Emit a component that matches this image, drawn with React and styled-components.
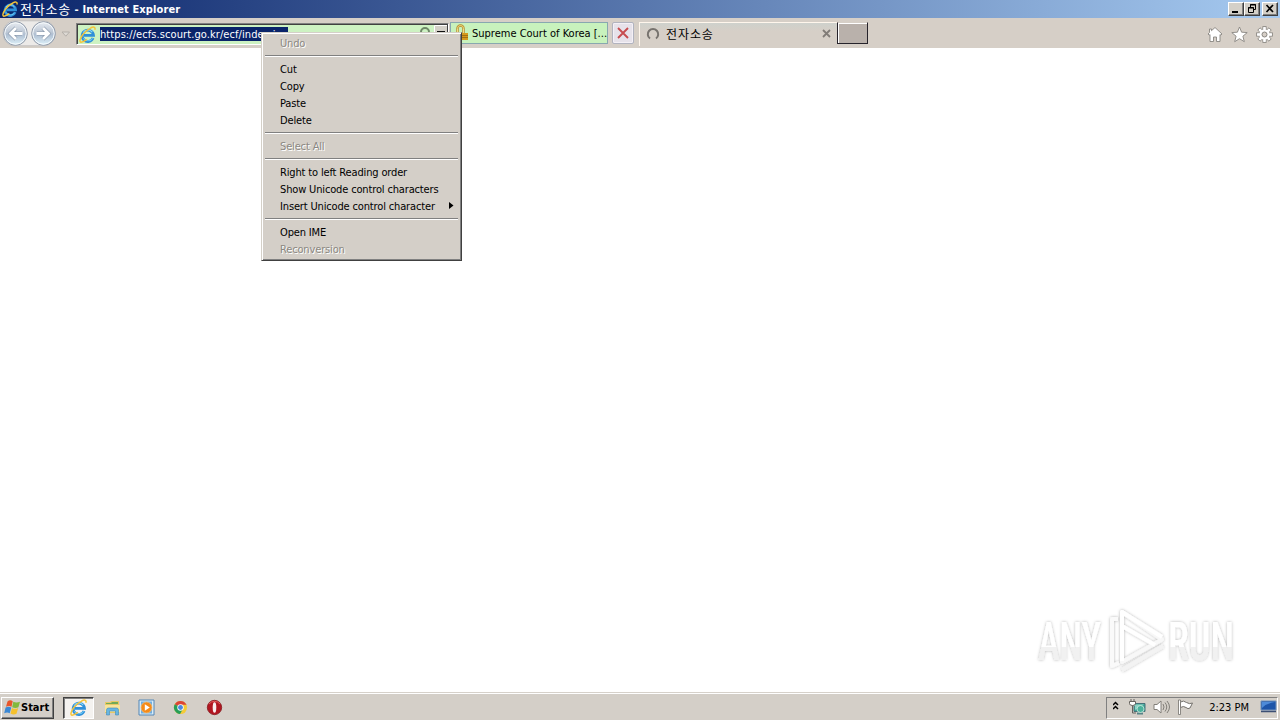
import React from "react";
import styled, { createGlobalStyle, css } from "styled-components";

const GlobalStyle = createGlobalStyle`
  * {
    box-sizing: border-box;
  }
  body {
    margin: 0;
    overflow: hidden;
    background: #fff;
    color: #000;
    font-family: "DejaVu Sans Condensed", "DejaVu Sans", "Noto Sans CJK KR", sans-serif;
    font-stretch: condensed;
    font-size: 11px;
  }
  svg {
    display: block;
    flex: none;
  }
`;

const Desktop = styled.div`
  position: relative;
  display: flex;
  flex-direction: column;
  width: 1280px;
  height: 720px;
  overflow: hidden;
`;

const TitleBar = styled.header`
  display: flex;
  align-items: center;
  height: 18px;
  padding: 0 2px;
  background: linear-gradient(90deg, #0a246a, #a6caf0);
  color: #fff;
`;

const Label = styled.span`
  padding-top: 2px;
  white-space: pre;
  line-height: 16px;
  font-size: ${p => p.$size || 11}px;
  font-weight: ${p => (p.$bold ? 700 : 400)};
  letter-spacing: ${p => p.$track || 0}px;
`;

const Korean = styled(Label)`
  padding-top: 1px;
  font-family: "Noto Sans CJK KR", sans-serif;
`;

const Caption = styled.div`
  display: flex;
  flex: 1;
  padding-left: 2px;
`;

const WindowButton = styled.button`
  width: 16px;
  height: 14px;
  margin-left: ${p => p.$gap || 0}px;
  padding: 0;
  border: 1px solid;
  border-color: #fff #404040 #404040 #fff;
  box-shadow: inset -1px -1px #808080;
  background: #d4d0c8;
`;

const Toolbar = styled.nav`
  display: flex;
  align-items: flex-start;
  height: 30px;
  padding: 0 7px 0 2px;
  border-top: 2px solid #d6cfc8;
  background: #d6cfc7;
`;

const NavButtons = styled.div`
  width: 74px;
`;

const AddressBar = styled.div`
  display: flex;
  align-items: center;
  width: 373px;
  height: 22px;
  margin-top: 3px;
  padding-left: 2px;
  border: 1px solid;
  border-color: #808080 #fff #fff #808080;
  box-shadow: inset 1px 1px #404040;
  background: #cdf2c2;
`;

const SelectedUrl = styled.div`
  display: flex;
  align-items: center;
  width: 188px;
  height: 14px;
  margin-left: 4px;
  overflow: hidden;
  background: #0a246a;
  color: #fff;
`;

const AddressTools = styled.div`
  display: flex;
  flex: 1;
  justify-content: flex-end;
  gap: 3px;
`;

const Certificate = styled.div`
  display: flex;
  align-items: center;
  width: 158px;
  height: 22px;
  margin: 2px 0 0 1px;
  padding-left: 5px;
  gap: 4px;
  border: 1px solid #88a8b0;
  background: #c8f2bd;
`;

const StopButton = styled.button`
  display: grid;
  place-items: center;
  width: 22px;
  height: 22px;
  margin: 2px 0 0 4px;
  padding: 0;
  border: 1px solid #b1b3bf;
  border-radius: 2px;
  background: #e6e2ea;
  box-shadow: inset 0 0 0 1px #f4f0f6;
`;

const Tab = styled.div`
  display: flex;
  align-items: center;
  width: 198px;
  height: 24px;
  margin: 2px 0 0 5px;
  padding: 0 6px 2px 6px;
  gap: 6px;
  border-top: 1px solid #fff6ec;
  border-left: 1px solid #fff6ec;
  background: linear-gradient(#ced1cc, #d6cfc7 8px);
`;

const TabTitle = styled.div`
  display: flex;
  flex: 1;
`;

const NewTab = styled.div`
  width: 31px;
  height: 22px;
  margin-top: 2px;
  border: 1px solid #25222a;
  border-top-color: #d6cfc7;
  box-shadow: inset 1px 1px #fff;
  background: #b9b1ab;
`;

const CommandIcons = styled.div`
  display: flex;
  flex: 1;
  justify-content: flex-end;
  gap: 8px;
  padding-top: 6px;
`;

const Page = styled.main`
  position: relative;
  flex: 1;
  background: #fff;
`;

const Watermark = styled.div`
  position: absolute;
  left: 1030px;
  top: 558px;
`;

const Menu = styled.div`
  position: absolute;
  left: 261px;
  top: 32px;
  width: 201px;
  height: 229px;
  padding: 2px 3px 0;
  border: 1px solid;
  border-color: #d4d0c8 #404040 #404040 #d4d0c8;
  box-shadow: inset 1px 1px #fff, inset -1px -1px #808080;
  background: #d4cfc8;
`;

const MenuItem = styled.div`
  display: flex;
  align-items: center;
  justify-content: space-between;
  height: 17px;
  padding: 0 4px 2px 15px;
  ${p =>
    p.$disabled &&
    css`
      color: #8b8882;
      text-shadow: 1px 1px #fff;
    `}
`;

const Separator = styled.div`
  height: 2px;
  margin: 3px 0 4px;
  border-top: 1px solid #808080;
  border-bottom: 1px solid #fff;
`;

const Taskbar = styled.footer`
  display: flex;
  align-items: center;
  height: 28px;
  padding: 3px 2px 1px 1px;
  border-top: 1px solid #d6d1ca;
  box-shadow: inset 0 1px #fff;
  background: #d4cfc8;
`;

const StartButton = styled.button`
  display: flex;
  align-items: center;
  width: 53px;
  height: 22px;
  padding: 0 0 1px 2px;
  border: 1px solid;
  border-color: #fff #404040 #404040 #fff;
  box-shadow: inset -1px -1px #808080;
  background: #d4cfc8;
  color: #000;
  font-family: inherit;
`;

const TaskButton = styled.div`
  display: grid;
  place-items: center;
  width: ${p => (p.$active ? 31 : 34)}px;
  height: 22px;
  ${p =>
    p.$active &&
    css`
      margin: 0 1px 0 9px;
      border: 1px solid;
      border-color: #404040 #fff #fff #404040;
      box-shadow: inset 1px 1px #808080;
      background: #f4f2ef;
    `}
`;

const Tray = styled.div`
  display: flex;
  align-items: center;
  width: 172px;
  height: 22px;
  margin-left: auto;
  padding: 0 0 1px 6px;
  border: 1px solid;
  border-color: #808080 #fff #fff #808080;
`;

const Clock = styled.div`
  flex: 1;
  display: flex;
  justify-content: flex-end;
  padding-right: 11px;
`;

const IeIcon = ({ size = 16 }) => (
  <svg width={size} height={size} viewBox="0 0 16 16" fill="none">
    <path d="M13.200 11.300A5.300 5.300 0 1 1 13.600 8.800H4.600" stroke="#2f8fd8" strokeWidth="2.700" />
    <path d="M12.900 11.500A5.300 5.300 0 0 1 4 11.500" stroke="#6cc8f4" strokeWidth="1" />
    <path d="M3.800 6.300A5.300 5.300 0 0 1 12.500 5.800" stroke="#86d8f9" strokeWidth="1" />
    <path
      d="M10.500 2.200C13.400.4 15.800.6 14.900 3.500M3.200 8.700C.6 12 .2 15.200 2 15.200c1.500 0 3.700-1.300 5.400-2.600M3 8.600C5 5.900 8 3.300 11 2"
      stroke="#f5c43a"
      strokeWidth="1.400"
    />
  </svg>
);

const BackForward = () => (
  <svg width="72" height="28" viewBox="0 0 72 28" fill="none">
    <defs>
      <linearGradient id="orb" x1="0" y1="0" x2="0" y2="1">
        <stop offset="0" stopColor="#e9edf2" />
        <stop offset=".45" stopColor="#bcc7d5" />
        <stop offset=".55" stopColor="#afbfd2" />
        <stop offset="1" stopColor="#e1f4fc" />
      </linearGradient>
    </defs>
    <path d="M13 .8h28c16 0 16 25 0 25H13C-3 25.800-3 .8 13 .8z" fill="#eceae8" stroke="#c3c1c0" />
    {[13.5, 41.5].map(cx => (
      <g key={cx}>
        <circle cx={cx} cy="13.500" r="11.800" fill="url(#orb)" stroke="#929cab" />
        <circle cx={cx} cy="13.500" r="10.700" stroke="#f7fbfd" />
      </g>
    ))}
    <path d="M20 13.500H8.500M14 8l-5.500 5.500L14 19" stroke="#8796aa" strokeWidth="4" />
    <path d="M20.500 13.500H8.500M14 8l-5.500 5.500L14 19" stroke="#fff" strokeWidth="2.800" />
    <path d="M35 13.500h11.500M41 8l5.500 5.500L41 19" stroke="#8796aa" strokeWidth="4" />
    <path d="M34.500 13.500h12M41 8l5.500 5.500L41 19" stroke="#fff" strokeWidth="2.800" />
    <path d="M60 12h7.500l-3.700 4.200z" fill="#dedad5" stroke="#b4afa9" />
  </svg>
);

const SearchGlyph = () => (
  <svg width="13" height="16" viewBox="0 0 13 16" fill="none">
    <circle cx="7" cy="7" r="4" stroke="#6e8767" strokeWidth="2" />
    <path d="m4 10-3 4" stroke="#6e8767" strokeWidth="2" />
  </svg>
);

const DropGlyph = () => (
  <svg width="14" height="18" viewBox="0 0 14 18">
    <path d="M0 0h14v18H0z" fill="#d4d0c8" />
    <path d="M.5 18V.5H14" stroke="#fff" fill="none" />
    <path d="M13.500 0v18" stroke="#404040" />
    <path d="M3 6h8v2l-4 4-4-4z" fill="#111" />
  </svg>
);

const Padlock = () => (
  <svg width="12" height="18" viewBox="0 0 12 18" fill="none">
    <path d="M1.500 8V4.500a3 3 0 0 1 6 0V10" stroke="#b28b29" strokeWidth="2.400" />
    <path d="M1.500 8V4.500a3 3 0 0 1 6 0V10" stroke="#f3dc87" strokeWidth="1" />
    <path d="M3 9h9v7H3z" fill="#d59a1c" />
    <path d="M4 11.500h8m-8 2h8" stroke="#a36f10" />
  </svg>
);

const HomeIcon = () => (
  <svg width="16" height="17" viewBox="0 0 16 17">
    <path
      d="M8 1.500 15 8l-1.200 1.200-.8-.7v7H9.500V11h-3v4.500H3v-7l-.8.7L1 8l1.500-1.500V3h2v1.700z"
      fill="#fff"
      stroke="#898681"
      strokeWidth=".9"
    />
  </svg>
);

const StarIcon = () => (
  <svg width="17" height="17" viewBox="0 0 17 17">
    <path
      d="m8.500 1 2.100 5.200 5.600.4-4.300 3.600 1.400 5.500-4.800-3-4.800 3 1.400-5.500L.8 6.600l5.600-.4z"
      fill="#fff"
      stroke="#898681"
      strokeWidth=".9"
    />
  </svg>
);

const teeth = [0, 45, 90, 135, 180, 225, 270, 315];

const GearIcon = () => (
  <svg width="17" height="17" viewBox="0 0 17 17">
    {teeth.map(a => (
      <rect
        key={a}
        x="6.900"
        y=".6"
        width="3.200"
        height="5"
        fill="#fff"
        stroke="#898681"
        strokeWidth=".9"
        transform={`rotate(${a} 8.500 8.500)`}
      />
    ))}
    <circle cx="8.500" cy="8.500" r="5.500" fill="#fff" stroke="#898681" strokeWidth=".7" />
    {teeth.map(a => (
      <rect key={a} x="7.300" y="1.500" width="2.400" height="4" fill="#fff" transform={`rotate(${a} 8.500 8.500)`} />
    ))}
    <circle cx="8.500" cy="8.500" r="2.500" fill="#d6cfc7" stroke="#898681" />
  </svg>
);

const StartFlag = () => (
  <svg width="17" height="17" viewBox="0 0 17 17">
    <path d="M3.500 2.500Q6 .3 8.700 2.200L7.500 7.800Q5 6.200 2 7.800z" fill="#e8562a" />
    <path d="M9.300 2.700q3 1.600 6.700 0l-1.600 5.500q-2.800 1.500-6.200 0z" fill="#82b93c" />
    <path d="M1.600 8.600q3-1.700 5.700 0L5.700 14.300q-2.500-1.700-5.500 0z" fill="#3b88d4" />
    <path d="M8 9q3 1.700 6.200 0l-1.700 5.700q-3 1.500-6 -.2z" fill="#f5c12d" />
  </svg>
);

const FolderIcon = () => (
  <svg width="17" height="17" viewBox="0 0 17 17">
    <path d="M1 3h5l1-1h8v12H1z" fill="#e8c964" />
    <path d="M2 4h5l1-1h6v2H2z" fill="#72aa57" />
    <path d="M1 6h15v7H1z" fill="#f8e49b" />
    <path d="M2.500 16v-5q0-2 2-2h8q2 0 2 2v5h-3v-4h-6v4z" fill="#68b6e2" stroke="#428cb9" strokeWidth=".6" />
  </svg>
);

const PlayerIcon = () => (
  <svg width="17" height="17" viewBox="0 0 17 17">
    <path d="M1 1h15v15H1z" fill="#d7ebf8" stroke="#5386b6" />
    <path d="M3 2.500h11v12H3z" fill="#70aee0" />
    <circle cx="8.500" cy="8.500" r="5.500" fill="#f58a18" stroke="#fbc379" strokeWidth=".7" />
    <path d="m6.800 5.200 5 3.300-5 3.300z" fill="#fff" />
  </svg>
);

const ChromeIcon = () => (
  <svg width="15" height="15" viewBox="0 0 16 16">
    <circle cx="8" cy="8" r="7" fill="#f4cb38" />
    <path d="M8 8 1.900 4.500A7 7 0 0 1 14.100 4.500L14.400 5H8z" fill="#db4437" />
    <path d="M8 8 1.900 4.500A7 7 0 0 0 7.500 15l3.100-5.500z" fill="#279e58" />
    <circle cx="8" cy="8" r="3.400" fill="#fff" />
    <circle cx="8" cy="8" r="2.600" fill="#4a88df" />
  </svg>
);

const OperaIcon = () => (
  <svg width="17" height="17" viewBox="0 0 17 17">
    <circle cx="8.500" cy="8.500" r="7.200" fill="#b11620" stroke="#7d1015" strokeWidth=".7" />
    <path d="M3 5a7 7 0 0 1 11 0" stroke="#e65c5d" fill="none" />
    <ellipse cx="8.500" cy="8.500" rx="1.800" ry="5.300" fill="#f9eeee" />
  </svg>
);

const NetworkIcon = () => (
  <svg width="17" height="16" viewBox="0 0 17 16" fill="none">
    <path d="M5 4.500h11v8H5z" fill="#41a798" stroke="#477079" />
    <path d="M6 5.500h9L6 11z" fill="#8bd3c4" />
    <path d="M8 14.500h6" stroke="#578387" strokeWidth="2" />
    <circle cx="11.500" cy="10" r="3.500" fill="#4bb29c" stroke="#dcf2ea" strokeWidth=".7" />
    <path d="M1 2h5v4.500H1z" fill="#fff" />
    <path d="M.5 2.500h6v2q0 2-3 2t-3-2zM3.500 6.500V14H7M2 0v3m3-3v3" stroke="#66635e" />
  </svg>
);

const SpeakerIcon = () => (
  <svg width="18" height="16" viewBox="0 0 18 16" fill="none">
    <path d="M1 5.500h3L8 2v12l-4-3.500H1z" fill="#fff" stroke="#827f79" />
    <path d="M10 5q2 3 0 6M12 3.500q3.500 4.500 0 9M14 2q5 6 0 12" stroke="#827f79" />
  </svg>
);

const ActionFlag = () => (
  <svg width="17" height="16" viewBox="0 0 17 16">
    <path d="M3.500 3q3-2 6 .5 3 2 6 .5L13 9q-2 1.500-4-.5-2.500-2-5.500 0z" fill="#fff" stroke="#74716c" />
    <path d="M1.500 1h2v14.500h-2z" fill="#fff" stroke="#74716c" strokeWidth=".8" />
  </svg>
);

const DesktopIcon = () => (
  <svg width="17" height="14" viewBox="0 0 17 14">
    <path d="M1 1h15v9H1z" fill="#1d55a9" stroke="#7193bd" />
    <path d="M2 2h13Q7 3 2 8z" fill="#4d8bd9" />
    <path d="M1 11.500h15" stroke="#3c4f73" strokeWidth="1.500" />
  </svg>
);

const AnyRun = () => (
  <svg width="240" height="80" viewBox="0 0 240 80" fill="none">
    <defs>
      <filter id="soft" x="-10%" y="-10%" width="120%" height="120%">
        <feDropShadow dx="0" dy="0" stdDeviation="1.700" floodColor="#000" floodOpacity=".3" />
      </filter>
      <linearGradient id="fade" x1="0" y1="0" x2="0" y2="1">
        <stop offset=".58" stopColor="#fff" />
        <stop offset=".58" stopColor="#f1f1f1" />
      </linearGradient>
    </defs>
    <g filter="url(#soft)">
      <g fill="url(#fade)" fontFamily="Roboto, sans-serif" fontSize="53" fontWeight="500">
        <text x="8" y="60" transform="translate(0 -6)" textLength="63" lengthAdjust="spacingAndGlyphs">ANY</text>
        <text x="138" y="60" transform="translate(0 -6)" textLength="66" lengthAdjust="spacingAndGlyphs">RUN</text>
      </g>
      <g strokeWidth="4" strokeLinejoin="round" transform="translate(0 1)">
        <path d="M92 5v50l40-22.500z" stroke="#f8f8f8" />
        <path d="M132 30 92 5v49" stroke="#fff" />
        <path d="M88 12h-6v47l7-3" stroke="#fafafa" />
        <path d="m92 63 41-24" stroke="#f3f3f3" />
        <path d="m92 19 33 19" stroke="#fff" />
      </g>
    </g>
  </svg>
);

const menuItems = [
  { label: "Undo", disabled: true },
  null,
  { label: "Cut" },
  { label: "Copy" },
  { label: "Paste" },
  { label: "Delete" },
  null,
  { label: "Select All", disabled: true },
  null,
  { label: "Right to left Reading order" },
  { label: "Show Unicode control characters" },
  { label: "Insert Unicode control character", submenu: true },
  null,
  { label: "Open IME" },
  { label: "Reconversion", disabled: true }
];

const ContextMenu = () => (
  <Menu>
    {menuItems.map((item, i) =>
      item ? (
        <MenuItem key={item.label} $disabled={item.disabled}>
          <Label $track={-0.15}>{item.label}</Label>
          {item.submenu && (
            <svg width="5" height="7" viewBox="0 0 5 7">
              <path d="M0 0v7l4.500-3.500z" />
            </svg>
          )}
        </MenuItem>
      ) : (
        <Separator key={i} />
      )
    )}
  </Menu>
);

const App = () => (
  <>
    <GlobalStyle />
    <Desktop>
      <TitleBar>
        <IeIcon />
        <Caption>
          <Korean $size={13} $track={0.8}>전자소송</Korean>
          <Label $bold $track={0.12}> - Internet Explorer</Label>
        </Caption>
        <WindowButton>
          <svg width="14" height="12"><path d="M3 8h6v2H3z" /></svg>
        </WindowButton>
        <WindowButton>
          <svg width="14" height="12" fill="none" stroke="#000">
            <path d="M5.500 4V1.500h5v5H9M5 2h6M3.500 4.500h5v5h-5zM3 5h6" />
          </svg>
        </WindowButton>
        <WindowButton $gap={2}>
          <svg width="14" height="12"><path d="m3.500 2 6.500 7m0-7L3.500 9" stroke="#000" strokeWidth="1.700" /></svg>
        </WindowButton>
      </TitleBar>
      <Toolbar>
        <NavButtons>
          <BackForward />
        </NavButtons>
        <AddressBar>
          <IeIcon size={17} />
          <SelectedUrl>
            <Label $track={0.08}>https://ecfs.scourt.go.kr/ecf/index.jsp</Label>
          </SelectedUrl>
          <AddressTools>
            <SearchGlyph />
            <DropGlyph />
          </AddressTools>
        </AddressBar>
        <Certificate>
          <Padlock />
          <Label>Supreme Court of Korea [...</Label>
        </Certificate>
        <StopButton>
          <svg width="14" height="14">
            <path d="m2 2 10 10M12 2 2 12" stroke="#c74c50" strokeWidth="1.900" />
          </svg>
        </StopButton>
        <Tab>
          <svg width="14" height="14" fill="none">
            <path d="M4 11.500A5.200 5.200 0 1 1 10 11.500" stroke="#77736e" strokeWidth="2" />
          </svg>
          <TabTitle>
            <Korean $size={12} $track={0.9}>전자소송</Korean>
          </TabTitle>
          <svg width="9" height="9">
            <path d="m1 1 7 7m0-7L1 8" stroke="#817c77" strokeWidth="1.800" />
          </svg>
        </Tab>
        <NewTab />
        <CommandIcons>
          <HomeIcon />
          <StarIcon />
          <GearIcon />
        </CommandIcons>
      </Toolbar>
      <Page>
        <Watermark>
          <AnyRun />
        </Watermark>
      </Page>
      <Taskbar>
        <StartButton>
          <StartFlag />
          <Label $bold>Start</Label>
        </StartButton>
        <TaskButton $active>
          <IeIcon size={17} />
        </TaskButton>
        <TaskButton><FolderIcon /></TaskButton>
        <TaskButton><PlayerIcon /></TaskButton>
        <TaskButton><ChromeIcon /></TaskButton>
        <TaskButton><OperaIcon /></TaskButton>
        <Tray>
          <svg width="16" height="14" viewBox="0 0 16 14" fill="none" stroke="#000" strokeWidth="1.500">
            <path d="m0 5 2.500-2.500L5 5M0 9l2.500-2.500L5 9" />
          </svg>
          <NetworkIcon />
          <svg width="7" height="1" />
          <SpeakerIcon />
          <svg width="6" height="1" />
          <ActionFlag />
          <Clock>
            <Label>2:23 PM</Label>
          </Clock>
          <DesktopIcon />
        </Tray>
      </Taskbar>
      <ContextMenu />
    </Desktop>
  </>
);

export default App;
